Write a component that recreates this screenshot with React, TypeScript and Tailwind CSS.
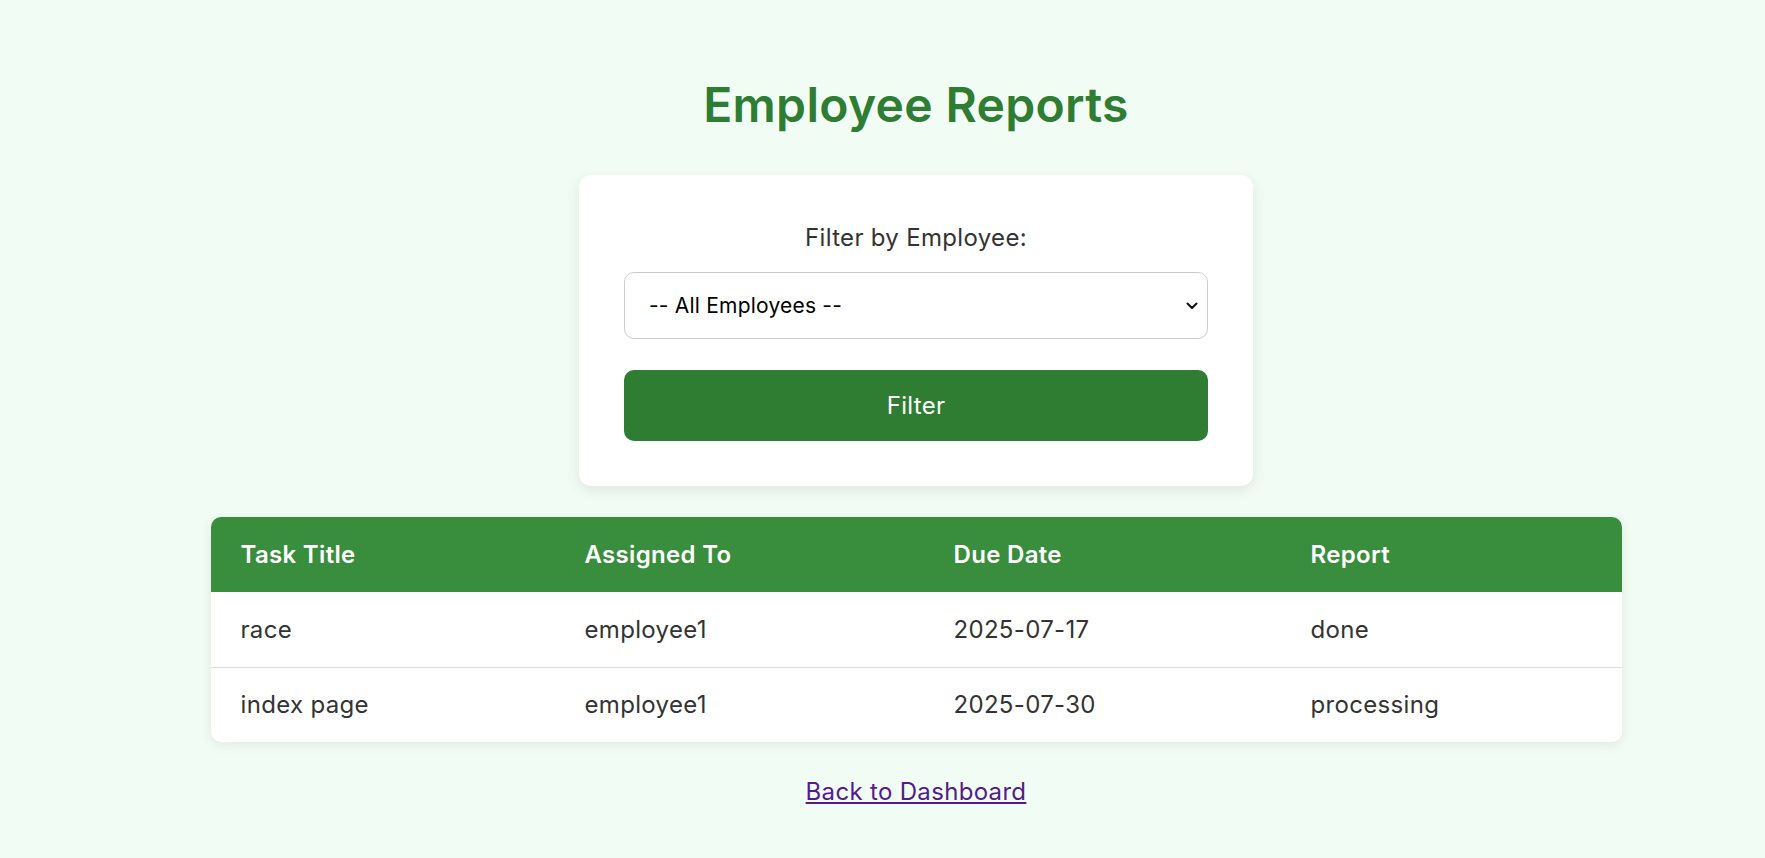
import { useState } from "react";

const rows = [
  { title: "race", assigned: "employee1", due: "2025-07-17", report: "done" },
  { title: "index page", assigned: "employee1", due: "2025-07-30", report: "processing" },
];

export default function App() {
  const [employee, setEmployee] = useState("");

  return (
    <div className="min-h-[858px] bg-[#f1fcf4] pl-[67px] pt-[81px] pb-10 font-['Inter',sans-serif] tracking-[0.02em] text-[#333]">
      <h1 className="text-center text-[48px] font-semibold leading-none text-[#2e7d32]">
        Employee Reports
      </h1>

      <form
        className="mx-auto mt-[46px] w-[674px] rounded-xl bg-white p-[45px] shadow-[0_4px_14px_rgba(0,0,0,0.09)]"
        onSubmit={(e) => e.preventDefault()}
      >
        <label htmlFor="employee" className="block text-center text-[24px] leading-9 text-[#333]">
          Filter by Employee:
        </label>

        <div className="relative mt-4">
          <select
            id="employee"
            value={employee}
            onChange={(e) => setEmployee(e.target.value)}
            className="h-[67px] w-full appearance-none rounded-[10px] border border-[#ccc] bg-white pl-[24px] pr-10 text-[21px] tracking-[0.01em] text-black outline-none"
          >
            <option value="">-- All Employees --</option>
            <option value="employee1">employee1</option>
          </select>
          <svg
            className="pointer-events-none absolute right-[10px] top-1/2 -translate-y-1/2"
            width="12"
            height="8"
            viewBox="0 0 12 8"
            fill="none"
          >
            <path d="M1.5 1.5 6 6l4.5-4.5" stroke="#111" strokeWidth="2" strokeLinecap="round" strokeLinejoin="round" />
          </svg>
        </div>

        <button
          type="submit"
          className="mt-[31px] h-[71px] w-full rounded-[10px] bg-[#2e7d32] text-[24px] text-white hover:bg-[#276b2b]"
        >
          Filter
        </button>
      </form>

      <div className="mx-auto mt-[31px] w-[1411px] overflow-hidden rounded-[10px] bg-white shadow-[0_3px_12px_rgba(0,0,0,0.08)]">
        <div className="grid h-[75px] grid-cols-[344px_369px_357px_341px] items-center bg-[#388e3c] text-[24px] font-semibold text-white">
          <div className="px-[30px]">Task Title</div>
          <div className="px-[30px]">Assigned To</div>
          <div className="px-[30px]">Due Date</div>
          <div className="px-[30px]">Report</div>
        </div>
        {rows.map((r, i) => (
          <div
            key={r.title}
            className={`grid h-[75px] grid-cols-[344px_369px_357px_341px] items-center text-[24px] text-[#333] ${
              i > 0 ? "border-t border-[#ddd]" : ""
            }`}
          >
            <div className="px-[30px]">{r.title}</div>
            <div className="px-[30px]">{r.assigned}</div>
            <div className="px-[30px]">{r.due}</div>
            <div className="px-[30px]">{r.report}</div>
          </div>
        ))}
      </div>

      <div className="mt-[32px] text-center">
        <a href="#" className="text-[24px] leading-9 text-[#551a8b] underline">
          Back to Dashboard
        </a>
      </div>
    </div>
  );
}
